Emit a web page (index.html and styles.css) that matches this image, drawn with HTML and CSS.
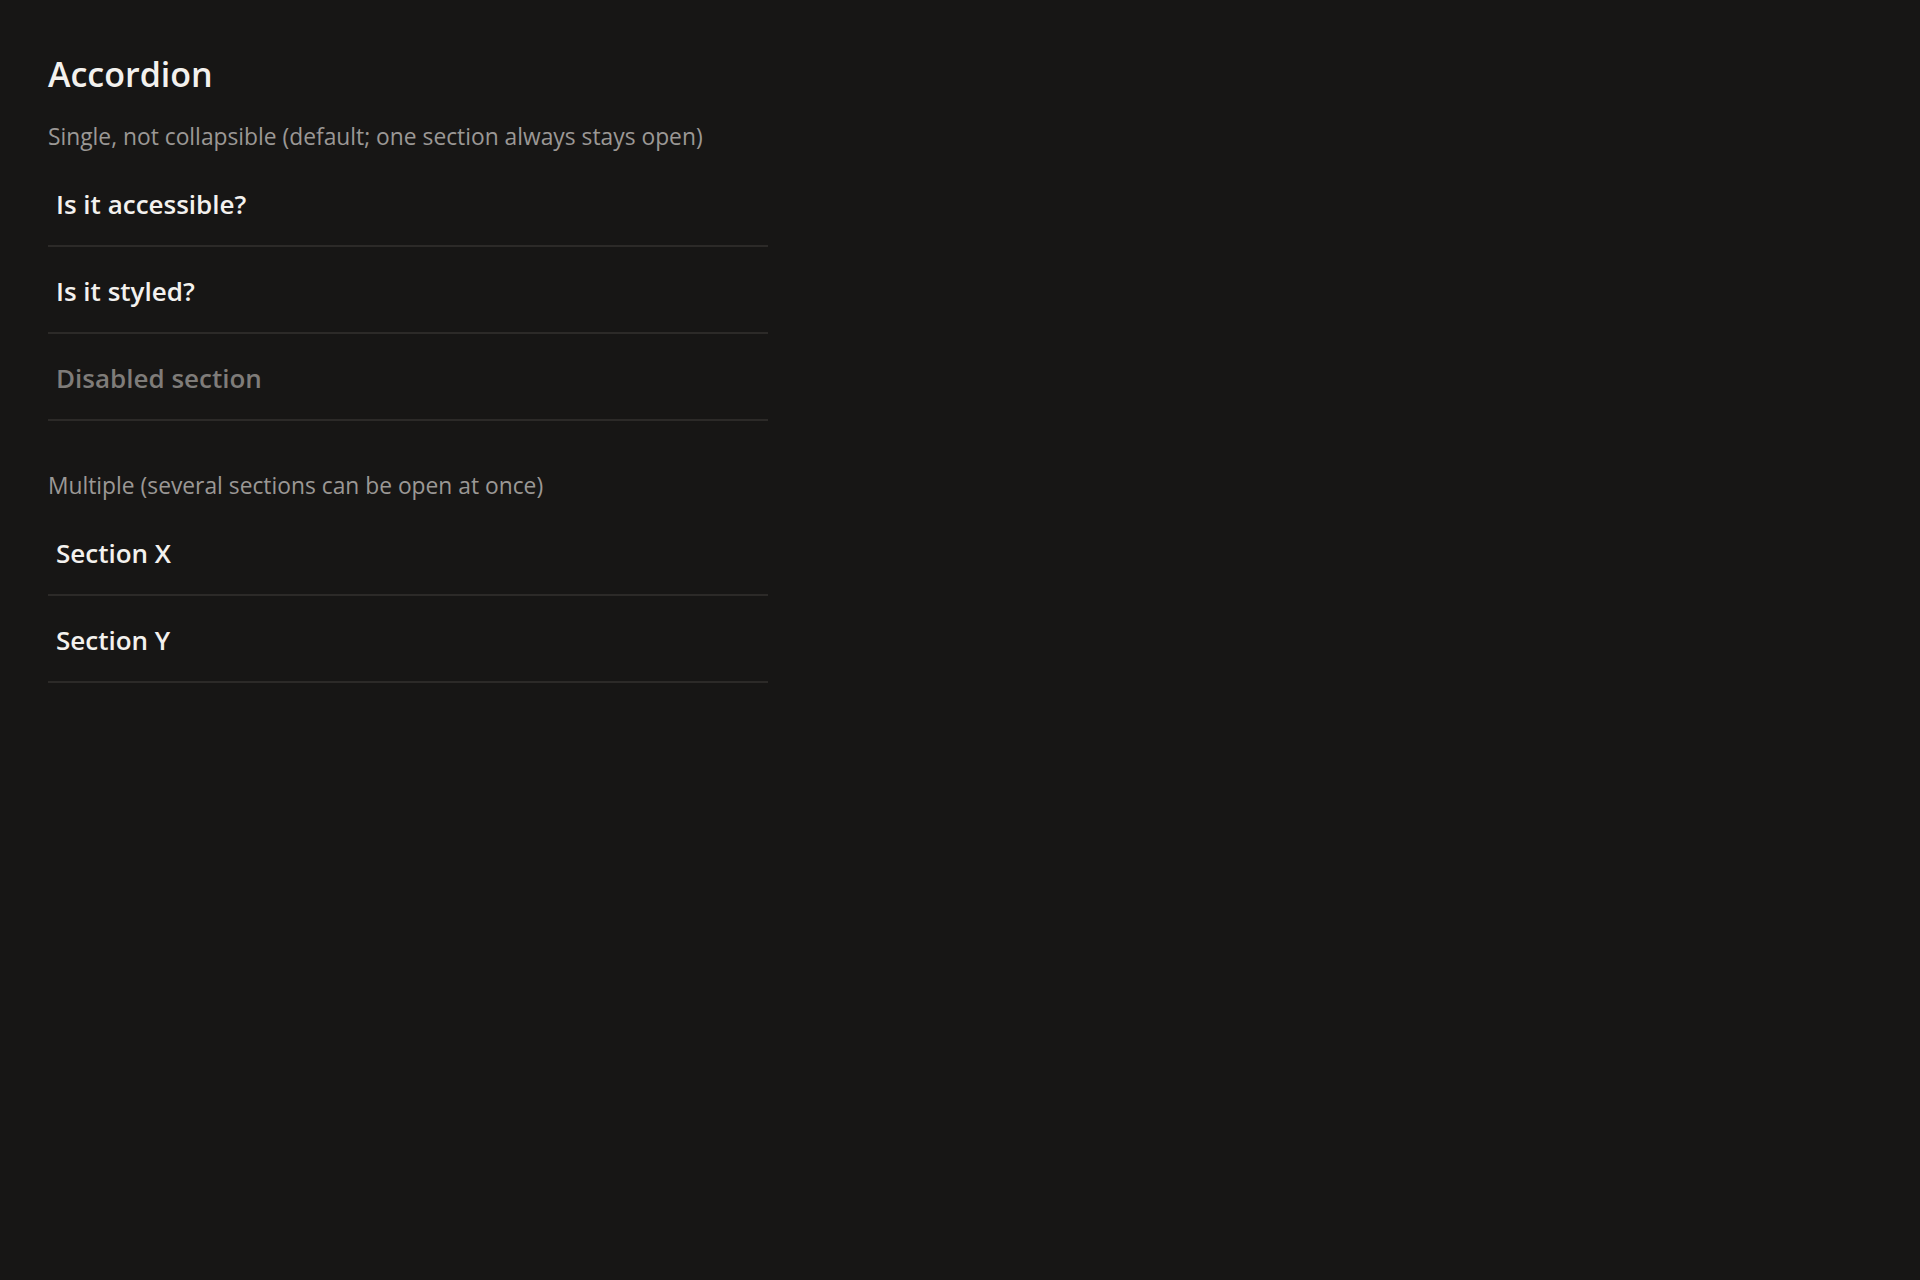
FILE: index.html
```html
<!DOCTYPE html>
<html lang="en">
<head>
  <meta charset="UTF-8">
  <meta name="viewport" content="width=device-width, initial-scale=1.0">
  <title>Accordion</title>
  <link rel="stylesheet" href="styles.css">
</head>
<body>
  <main class="page">
    <h1 class="page-title">Accordion</h1>

    <section class="demo">
      <p class="demo-caption">Single, not collapsible (default; one section always stays open)</p>
      <div class="accordion">
        <div class="accordion-item">
          <button class="accordion-trigger" type="button">Is it accessible?</button>
        </div>
        <div class="accordion-item">
          <button class="accordion-trigger" type="button">Is it styled?</button>
        </div>
        <div class="accordion-item">
          <button class="accordion-trigger" type="button" disabled>Disabled section</button>
        </div>
      </div>
    </section>

    <section class="demo demo-multiple">
      <p class="demo-caption">Multiple (several sections can be open at once)</p>
      <div class="accordion">
        <div class="accordion-item">
          <button class="accordion-trigger" type="button">Section X</button>
        </div>
        <div class="accordion-item">
          <button class="accordion-trigger" type="button">Section Y</button>
        </div>
      </div>
    </section>
  </main>
</body>
</html>
```

FILE: styles.css
```css
body {
  margin: 0;
  background-color: #171615;
  font-family: "Open Sans", "Noto Sans", sans-serif;
  color: #f3f1ee;
}

.page {
  padding: 52px 48px;
  width: 720px;
}

.page-title {
  margin: 0;
  font-size: 34px;
  line-height: 44px;
  font-weight: 600;
}

.demo-caption {
  margin: 26px 0 8px;
  font-size: 22.8px;
  line-height: 30px;
  color: #9b9895;
}

.demo-multiple .demo-caption {
  margin-top: 50px;
}

.accordion-item {
  border-bottom: 2px solid #2c2a28;
}

.accordion-trigger {
  display: flex;
  align-items: center;
  width: 100%;
  height: 85px;
  padding: 3px 8px 0;
  background: none;
  border: none;
  font-family: inherit;
  font-size: 26px;
  font-weight: 600;
  color: #f3f1ee;
  text-align: left;
  cursor: pointer;
}

.accordion-trigger:disabled {
  color: #7f7c79;
  cursor: default;
}
```
